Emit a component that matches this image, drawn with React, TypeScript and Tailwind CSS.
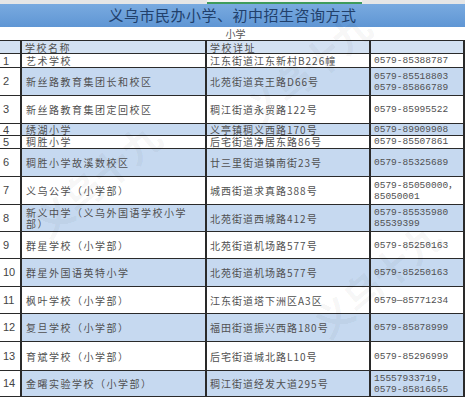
const cjk = "font-['Noto_Sans_CJK_SC',sans-serif]";
const mono = "font-['Liberation_Mono','Noto_Sans_CJK_SC',monospace]";

type Row = {
  no: string;
  name: string[];
  addr: string;
  phone: string[];
  h: string;
  blue: boolean;
};

const rows: Row[] = [
  { no: '1', name: ['艺术学校'], addr: '江东街道江东新村B226幢', phone: ['0579-85388787'], h: 'h-[14px] leading-[10px]', blue: false },
  { no: '2', name: ['新丝路教育集团长和校区'], addr: '北苑街道宾王路D66号', phone: ['0579-85518803', '0579-85866789'], h: 'h-[28px]', blue: true },
  { no: '3', name: ['新丝路教育集团定回校区'], addr: '稠江街道永贸路122号', phone: ['0579-85995522'], h: 'h-[28px]', blue: false },
  { no: '4', name: ['绣湖小学'], addr: '义亭镇稠义西路170号', phone: ['0579-89909908'], h: 'h-[12px] leading-[10px]', blue: true },
  { no: '5', name: ['稠胜小学'], addr: '后宅街道净居东路86号', phone: ['0579-85507861'], h: 'h-[13px] leading-[10px]', blue: false },
  { no: '6', name: ['稠胜小学故溪数校区'], addr: '廿三里街道镇南街23号', phone: ['0579-85325689'], h: 'h-[28px]', blue: true },
  { no: '7', name: ['义乌公学（小学部）'], addr: '城西街道求真路388号', phone: ['0579-85050000，', '85050001'], h: 'h-[28px]', blue: false },
  { no: '8', name: ['新义中学（义乌外国语学校小学', '部）'], addr: '北苑街道西城路412号', phone: ['0579-85535980', '85539399'], h: 'h-[27px]', blue: true },
  { no: '9', name: ['群星学校（小学部）'], addr: '北苑街道机场路577号', phone: ['0579-85250163'], h: 'h-[27px]', blue: false },
  { no: '10', name: ['群星外国语英特小学'], addr: '北苑街道机场路577号', phone: ['0579-85250163'], h: 'h-[28px]', blue: true },
  { no: '11', name: ['枫叶学校（小学部）'], addr: '江东街道塔下洲区A3区', phone: ['0579—85771234'], h: 'h-[27px]', blue: false },
  { no: '12', name: ['复旦学校（小学部）'], addr: '福田街道振兴西路180号', phone: ['0579-85878999'], h: 'h-[28px]', blue: true },
  { no: '13', name: ['育斌学校（小学部）'], addr: '后宅街道城北路L10号', phone: ['0579-85296999'], h: 'h-[29px]', blue: false },
  { no: '14', name: ['金曙实验学校（小学部）'], addr: '稠江街道经发大道295号', phone: ['15557933719，', '0579-85816655'], h: 'h-[26px]', blue: true },
];

function Cell({ children, className = '' }: { children?: React.ReactNode; className?: string }) {
  return (
    <div className={`flex flex-col justify-center overflow-hidden border-r-2 border-b border-[#2a2a2a] px-[3px] ${className}`}>
      {children}
    </div>
  );
}

export default function App() {
  return (
    <div className="relative w-[465px] h-[400px] overflow-hidden bg-white text-[#505050]">
      {/* excel column header strip */}
      <div className="flex h-[4px] bg-[#e6e6e6]">
        <div className="w-[207px]" />
        <div className="w-[155px] bg-[#f4f4f4] border-b-2 border-[#3f9b5c]" />
      </div>

      {/* title */}
      <div className={`flex h-[23px] items-center justify-center bg-linear-to-b from-[#79aae0] to-[#5f96d4] ${cjk} text-[15px] tracking-[0.5px] text-[#21406b]`}>
        义乌市民办小学、初中招生咨询方式
      </div>
      <div className={`flex h-[14px] items-center justify-center border-b border-[#2a2a2a] ${cjk} text-[10px] text-[#555]`}>
        <span className="pl-[6px]">小学</span>
      </div>

      <div className={`grid grid-cols-[22px_185px_164px_94px] ${cjk} text-[10px] leading-[11px]`}>
        {/* header */}
        <Cell className="h-[13px] bg-[#d3e1f2]" />
        <Cell className="h-[13px] bg-[#d3e1f2] tracking-[1.5px]">学校名称</Cell>
        <Cell className="h-[13px] bg-[#d3e1f2] tracking-[1.5px]">学校详址</Cell>
        <Cell className="h-[13px] bg-[#d3e1f2] border-r-0" />

        {rows.map((r) => (
          <div key={r.no} className="contents">
            <Cell className={`${r.h} bg-white font-['Liberation_Sans',sans-serif] text-[11px] text-[#444]`}>{r.no}</Cell>
            <Cell className={`${r.h} ${r.blue ? 'bg-[#c6d9f0]' : 'bg-white'} pl-[4px] tracking-[1.5px]`}>
              {r.name.map((n) => (
                <span key={n} className="whitespace-nowrap">{n}</span>
              ))}
            </Cell>
            <Cell className={`${r.h} ${r.blue ? 'bg-[#c6d9f0]' : 'bg-white'} tracking-[1px] whitespace-nowrap`}>{r.addr}</Cell>
            <Cell className={`${r.h} ${r.blue ? 'bg-[#c6d9f0]' : 'bg-white'} border-r-0 ${mono} text-[9.5px]`}>
              {r.phone.map((p) => (
                <span key={p} className="whitespace-nowrap">{p}</span>
              ))}
            </Cell>
          </div>
        ))}
      </div>

      {/* watermark */}
      <div className={`pointer-events-none absolute inset-0 ${cjk} text-[38px] font-bold text-black/[0.05]`}>
        <span className="absolute left-[20px] top-[150px] -rotate-[40deg]">义乌十九</span>
        <span className="absolute left-[230px] top-[40px] -rotate-[40deg]">义乌十九</span>
        <span className="absolute left-[300px] top-[250px] -rotate-[40deg]">义乌十九</span>
      </div>
    </div>
  );
}
